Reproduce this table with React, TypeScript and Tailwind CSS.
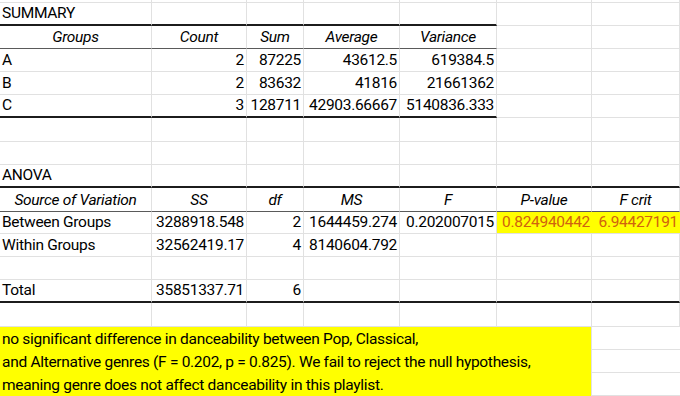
type Border = "grid" | "thick" | "thin"

interface CellSpec {
  text?: string
  align?: "l" | "r" | "c"
  italic?: boolean
  bottom?: Border
  hl?: boolean
}

interface RowSpec {
  h: string
  cells: CellSpec[]
}

const widths = ["w-[152px]", "w-[95px]", "w-[57px]", "w-[96px]", "w-[97px]", "w-[95px]", "w-[88px]"]

const bottomClass: Record<Border, string> = {
  grid: "border-b border-b-[#e1e1e1]",
  thick: "border-b-2 border-b-[#1c1c1c]",
  thin: "border-b border-b-[#5a5a5a]",
}

const alignClass = {
  l: "justify-start pl-[2px]",
  r: "justify-end pr-[2px]",
  c: "justify-center",
}

const blank = (n = 7, bottom: Border = "grid"): CellSpec[] => Array.from({ length: n }, () => ({ bottom }))

const summaryTop: CellSpec[] = [
  { text: "SUMMARY", bottom: "thick" },
  { bottom: "thick" },
  { bottom: "thick" },
  { bottom: "thick" },
  { bottom: "thick" },
  {},
  {},
]

const hdr = (labels: string[], n: number): CellSpec[] =>
  Array.from({ length: 7 }, (_, i) =>
    i < n ? { text: labels[i], italic: true, align: "c" as const, bottom: "thin" as const } : {}
  )

const dataRow = (vals: string[], last: Border = "grid"): CellSpec[] =>
  Array.from({ length: 7 }, (_, i) =>
    i < vals.length
      ? { text: vals[i], align: i === 0 ? ("l" as const) : ("r" as const), bottom: last }
      : i < 5 && last === "thick"
      ? { bottom: last }
      : {}
  )

const rows: RowSpec[] = [
  { h: "h-[2px]", cells: blank() },
  { h: "h-[24px]", cells: summaryTop },
  { h: "h-[23px]", cells: hdr(["Groups", "Count", "Sum", "Average", "Variance"], 5) },
  { h: "h-[23px]", cells: dataRow(["A", "2", "87225", "43612.5", "619384.5"]) },
  { h: "h-[23px]", cells: dataRow(["B", "2", "83632", "41816", "21661362"]) },
  { h: "h-[23px]", cells: dataRow(["C", "3", "128711", "42903.66667", "5140836.333"], "thick") },
  { h: "h-[24px]", cells: blank() },
  { h: "h-[23px]", cells: blank() },
  {
    h: "h-[23px]",
    cells: [{ text: "ANOVA", bottom: "thick" }, ...blank(6, "thick")],
  },
  {
    h: "h-[24px]",
    cells: hdr(["Source of Variation", "SS", "df", "MS", "F", "P-value", "F crit"], 7),
  },
  {
    h: "h-[22px]",
    cells: [
      { text: "Between Groups", align: "l" },
      { text: "3288918.548", align: "r" },
      { text: "2", align: "r" },
      { text: "1644459.274", align: "r" },
      { text: "0.202007015", align: "r" },
      { text: "0.824940442", align: "r", hl: true },
      { text: "6.94427191", align: "r", hl: true },
    ],
  },
  {
    h: "h-[23px]",
    cells: [
      { text: "Within Groups", align: "l" },
      { text: "32562419.17", align: "r" },
      { text: "4", align: "r" },
      { text: "8140604.792", align: "r" },
      {},
      {},
      {},
    ],
  },
  { h: "h-[23px]", cells: blank() },
  {
    h: "h-[23px]",
    cells: [
      { text: "Total", align: "l", bottom: "thick" },
      { text: "35851337.71", align: "r", bottom: "thick" },
      { text: "6", align: "r", bottom: "thick" },
      ...blank(4, "thick"),
    ],
  },
  { h: "h-[24px]", cells: blank() },
]

const note = [
  "no significant difference in danceability between Pop, Classical,",
  "and Alternative genres (F = 0.202, p = 0.825). We fail to reject the null hypothesis,",
  "meaning genre does not affect danceability in this playlist.",
]

function Cell({ spec, w }: { spec: CellSpec; w: string }) {
  const bottom = bottomClass[spec.bottom ?? "grid"]
  return (
    <div
      className={`${w} shrink-0 flex items-end pb-[2px] whitespace-nowrap overflow-visible ${bottom} ${
        spec.hl ? "bg-[#ffff00] text-[#d0620f]" : "border-r border-r-[#e1e1e1]"
      } ${alignClass[spec.align ?? "l"]} ${spec.italic ? "italic" : ""}`}
    >
      {spec.text}
    </div>
  )
}

export default function App() {
  return (
    <div className="w-[680px] h-[396px] overflow-hidden bg-white text-black text-[15.5px] leading-[18px] tracking-[-0.3px] font-['Roboto',sans-serif]">
      {rows.map((r, i) => (
        <div key={i} className={`flex ${r.h}`}>
          {r.cells.map((c, j) => (
            <Cell key={j} spec={c} w={widths[j]} />
          ))}
        </div>
      ))}
      <div className="flex">
        <div className="w-[592px] shrink-0 bg-[#ffff00] border-r border-r-[#e1e1e1] pl-[2px]">
          {note.map((t, i) => (
            <div key={i} className="h-[23px] flex items-end pb-[2px] whitespace-nowrap">
              {t}
            </div>
          ))}
        </div>
        <div className="w-[88px] shrink-0">
          {note.map((_, i) => (
            <div key={i} className="h-[23px] border-b border-b-[#e1e1e1]" />
          ))}
        </div>
      </div>
    </div>
  )
}
